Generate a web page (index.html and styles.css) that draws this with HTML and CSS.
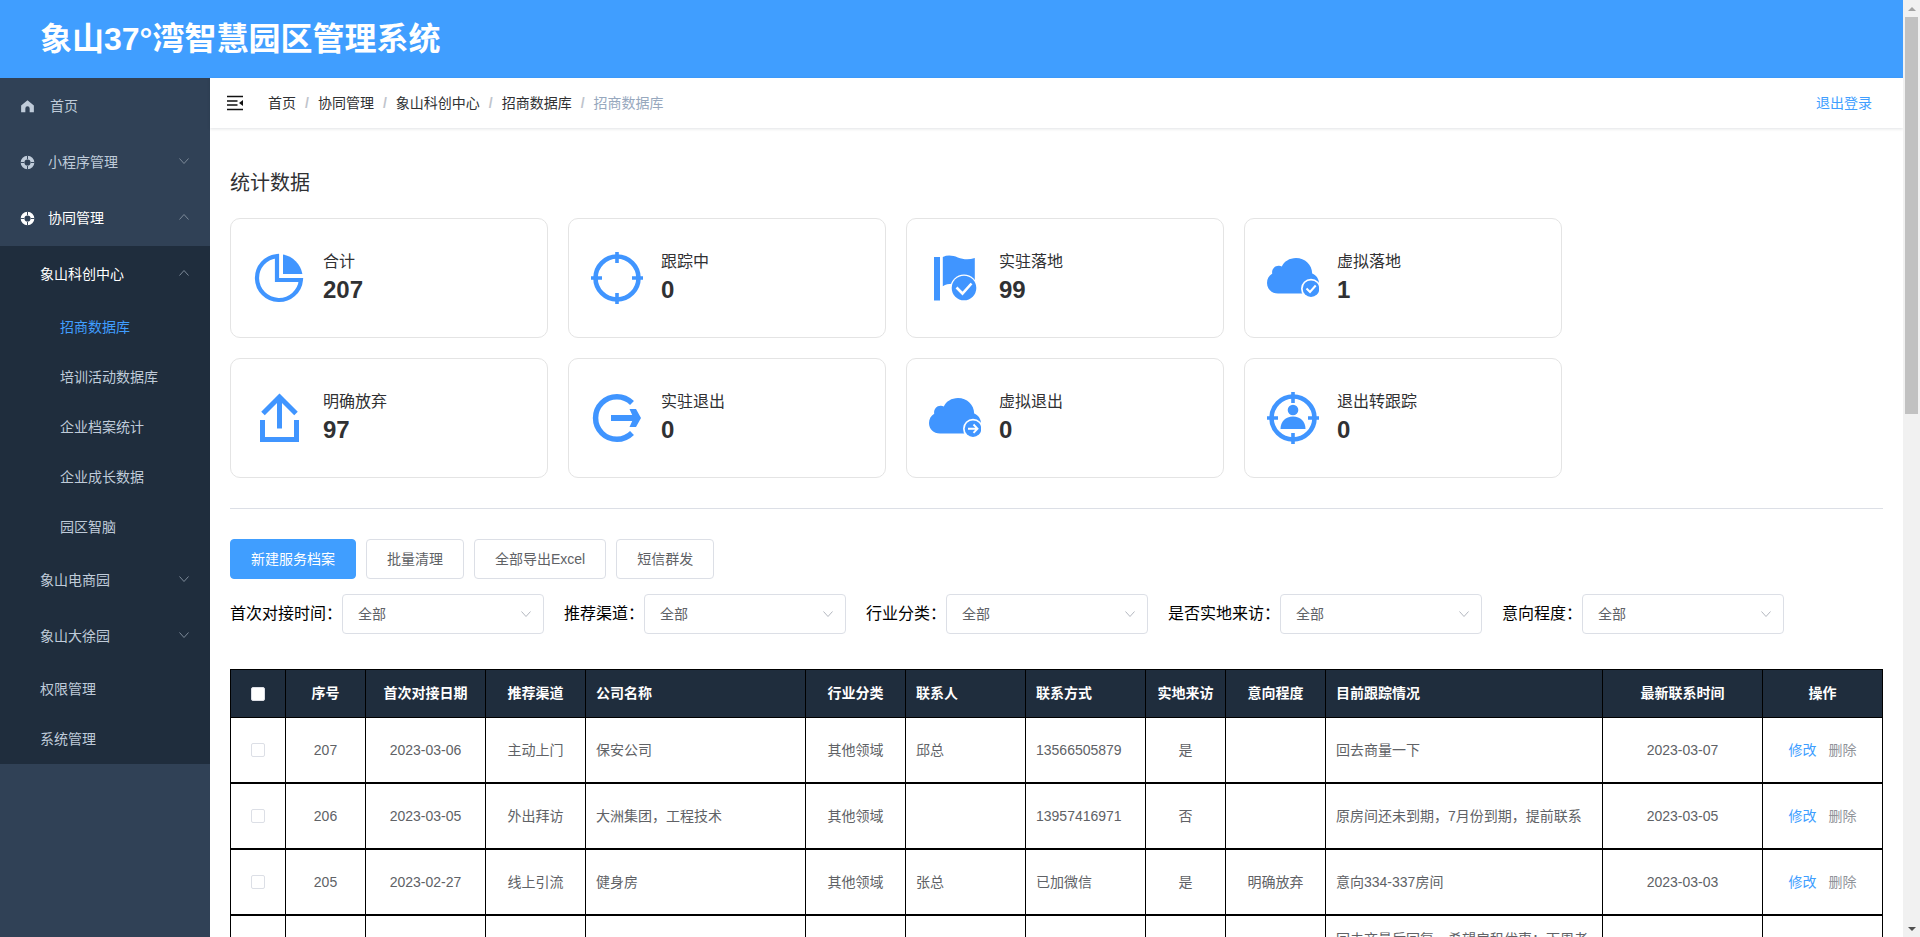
FILE: index.html
```html
<!DOCTYPE html>
<html lang="zh-CN">
<head>
<meta charset="utf-8">
<meta name="viewport" content="width=device-width, initial-scale=1">
<title>象山37°湾智慧园区管理系统</title>
<link rel="stylesheet" href="styles.css">
</head>
<body>
<svg class="sprite" aria-hidden="true">
  <symbol id="down" viewBox="0 0 12 12"><path d="M1.500 3.500 6 8.500l4.500-5" fill="none" stroke="currentColor"/></symbol>
  <symbol id="up" viewBox="0 0 12 12"><path d="M1.500 8.500 6 3.500l4.500 5" fill="none" stroke="currentColor"/></symbol>
  <symbol id="ring" viewBox="0 0 16 16"><circle cx="8" cy="8" r="5.300" fill="none" stroke="currentColor" stroke-width="4"/><path d="M8 .5v4M8 11.500v4M.5 8h4M11.500 8h4" class="ring-cut" stroke-width="1"/></symbol>
  <symbol id="target" viewBox="0 0 52 52"><g fill="none" stroke="currentColor"><circle cx="26" cy="26" r="21.500" stroke-width="4.600"/><path d="M26 0v11M26 41v11M0 26h11M41 26h11" stroke-width="3.600"/></g></symbol>
  <symbol id="cloud" viewBox="0 0 52 52"><path fill="currentColor" d="M11 41.500C4.500 41.500 0 37 0 31c0-4 2-7.500 5.200-9.300C4.500 17 8 13.500 12 13.800c1 0 2 .3 2.800.7C17 9.500 22.500 6 29 6c9 0 16 6.700 16.200 15.500C49.500 23.500 52 27 52 31.500c0 6-4 10-10 10z"/><circle cx="44" cy="36.700" r="10" fill="#fff"/><circle cx="44" cy="36.700" r="8.300" fill="currentColor"/></symbol>
</svg>
<div class="window">
  <div class="app">
    <header class="banner"><h1>象山37°湾智慧园区管理系统</h1></header>
    <div class="body">
      <nav class="side" aria-label="主菜单">
        <a class="item home" href="#"><svg class="nav-icon" viewBox="0 0 16 16"><path fill="currentColor" d="M8 1.300 14.800 7v7.200h-4.500V10a2.300 2.300 0 0 0-4.600 0v4.200H1.200V7z"/></svg>首页</a>
        <button class="item" type="button"><svg class="nav-icon"><use href="#ring"/></svg>小程序管理<svg class="arrow"><use href="#down"/></svg></button>
        <button class="item open" type="button"><svg class="nav-icon"><use href="#ring"/></svg>协同管理<svg class="arrow"><use href="#up"/></svg></button>
        <div class="submenu">
          <button class="item open" type="button">象山科创中心<svg class="arrow"><use href="#up"/></svg></button>
          <a class="item leaf deep current" href="#">招商数据库</a>
          <a class="item leaf deep" href="#">培训活动数据库</a>
          <a class="item leaf deep" href="#">企业档案统计</a>
          <a class="item leaf deep" href="#">企业成长数据</a>
          <a class="item leaf deep" href="#">园区智脑</a>
          <button class="item" type="button">象山电商园<svg class="arrow"><use href="#down"/></svg></button>
          <button class="item" type="button">象山大徐园<svg class="arrow"><use href="#down"/></svg></button>
          <a class="item leaf" href="#">权限管理</a>
          <a class="item leaf" href="#">系统管理</a>
        </div>
      </nav>
      <div class="main">
        <div class="topbar">
          <button class="fold" type="button" aria-label="收起菜单"><svg viewBox="0 0 16 16"><path d="M0 1.500h16M0 6h10.500M0 10h10.500M0 14.500h16" stroke="currentColor" stroke-width="1.600"/><path d="M16 5v6l-4-3z" fill="currentColor"/></svg></button>
          <ol class="crumbs">
            <li><a href="#">首页</a></li><li><a href="#">协同管理</a></li><li><a href="#">象山科创中心</a></li><li><a href="#">招商数据库</a></li><li>招商数据库</li>
          </ol>
          <a class="logout" href="#">退出登录</a>
        </div>
        <main class="content">
          <h2>统计数据</h2>
          <section class="stats">
            <div class="card"><svg class="stat-icon" viewBox="0 0 52 52"><path d="M24 4.100A22 22 0 1 0 47.900 28H24z" fill="none" stroke="currentColor" stroke-width="4.200"/><path d="M30 2.600A24 24 0 0 1 49.400 22H30z" fill="currentColor"/></svg><div class="stat"><span>合计</span><strong>207</strong></div></div>
            <div class="card"><svg class="stat-icon"><use href="#target"/></svg><div class="stat"><span>跟踪中</span><strong>0</strong></div></div>
            <div class="card"><svg class="stat-icon" viewBox="0 0 52 52"><path fill="currentColor" d="M5 5h6v43.500H5zM13.800 5c5-2.300 10-1.500 15 .5 5.500 2 11 2.500 17 .5v26H25c-4-.5-7.500.3-11.200 2.200z"/><circle cx="35" cy="36" r="13.600" fill="#fff"/><circle cx="35" cy="36" r="12.300" fill="currentColor"/><path d="m27.500 35.500 6 6 9-10" fill="none" stroke="#fff" stroke-width="2.600"/></svg><div class="stat"><span>实驻落地</span><strong>99</strong></div></div>
            <div class="card"><svg class="stat-icon" viewBox="0 0 52 52"><use href="#cloud"/><path d="m39.500 36.500 3.500 3.500 5.700-6.500" fill="none" stroke="#fff" stroke-width="2"/></svg><div class="stat"><span>虚拟落地</span><strong>1</strong></div></div>
            <div class="card"><svg class="stat-icon" viewBox="0 0 52 52"><g fill="none" stroke="currentColor" stroke-width="5"><path d="M9.500 28v19.500h34V28M26.500 36.500V6"/><path d="M10 21.500 26.500 5 43 21.500"/></g></svg><div class="stat"><span>明确放弃</span><strong>97</strong></div></div>
            <div class="card"><svg class="stat-icon" viewBox="0 0 52 52"><path d="M41 11A21.300 21.300 0 1 0 41 41" fill="none" stroke="currentColor" stroke-width="5.500"/><path d="M38.500 17H45l5 9-5 9h-6.500l2.700-6H20v-6h21.200z" fill="currentColor"/></svg><div class="stat"><span>实驻退出</span><strong>0</strong></div></div>
            <div class="card"><svg class="stat-icon" viewBox="0 0 52 52"><use href="#cloud"/><path d="M39 36.700h9M44.500 32.500l4 4.200-4 4.200" fill="none" stroke="#fff" stroke-width="1.900"/></svg><div class="stat"><span>虚拟退出</span><strong>0</strong></div></div>
            <div class="card"><svg class="stat-icon" viewBox="0 0 52 52"><use href="#target"/><circle cx="26" cy="18" r="5.300" fill="currentColor"/><path d="M13.500 37c0-7.500 5-12.500 12.500-12.500S38.500 29.500 38.500 37z" fill="currentColor"/></svg><div class="stat"><span>退出转跟踪</span><strong>0</strong></div></div>
          </section>
          <hr class="divider">
          <div class="actions">
            <button class="btn primary" type="button">新建服务档案</button>
            <button class="btn" type="button">批量清理</button>
            <button class="btn" type="button">全部导出Excel</button>
            <button class="btn" type="button">短信群发</button>
          </div>
          <form class="filters">
            <div class="filter"><label for="f1">首次对接时间：</label><div class="pick"><select id="f1"><option>全部</option></select><svg><use href="#down"/></svg></div></div>
            <div class="filter"><label for="f2">推荐渠道：</label><div class="pick"><select id="f2"><option>全部</option></select><svg><use href="#down"/></svg></div></div>
            <div class="filter"><label for="f3">行业分类：</label><div class="pick"><select id="f3"><option>全部</option></select><svg><use href="#down"/></svg></div></div>
            <div class="filter"><label for="f4">是否实地来访：</label><div class="pick"><select id="f4"><option>全部</option></select><svg><use href="#down"/></svg></div></div>
            <div class="filter"><label for="f5">意向程度：</label><div class="pick"><select id="f5"><option>全部</option></select><svg><use href="#down"/></svg></div></div>
          </form>
          <table class="grid">
            <colgroup><col class="w-check"><col class="w-80"><col class="w-120"><col class="w-100"><col class="w-220"><col class="w-100"><col class="w-120"><col class="w-120"><col class="w-80"><col class="w-100"><col><col class="w-160"><col class="w-120"></colgroup>
            <thead><tr><th><input type="checkbox" aria-label="全选"></th><th>序号</th><th>首次对接日期</th><th>推荐渠道</th><th class="left">公司名称</th><th>行业分类</th><th class="left">联系人</th><th class="left">联系方式</th><th>实地来访</th><th>意向程度</th><th class="left">目前跟踪情况</th><th>最新联系时间</th><th>操作</th></tr></thead>
            <tbody>
              <tr><td><input type="checkbox" aria-label="选择207"></td><td>207</td><td>2023-03-06</td><td>主动上门</td><td class="left">保安公司</td><td>其他领域</td><td class="left">邱总</td><td class="left">13566505879</td><td>是</td><td></td><td class="left">回去商量一下</td><td>2023-03-07</td><td><a class="edit" href="#">修改</a><a class="remove" href="#">删除</a></td></tr>
              <tr><td><input type="checkbox" aria-label="选择206"></td><td>206</td><td>2023-03-05</td><td>外出拜访</td><td class="left">大洲集团，工程技术</td><td>其他领域</td><td class="left"></td><td class="left">13957416971</td><td>否</td><td></td><td class="left">原房间还未到期，7月份到期，提前联系</td><td>2023-03-05</td><td><a class="edit" href="#">修改</a><a class="remove" href="#">删除</a></td></tr>
              <tr><td><input type="checkbox" aria-label="选择205"></td><td>205</td><td>2023-02-27</td><td>线上引流</td><td class="left">健身房</td><td>其他领域</td><td class="left">张总</td><td class="left">已加微信</td><td>是</td><td>明确放弃</td><td class="left">意向334-337房间</td><td>2023-03-03</td><td><a class="edit" href="#">修改</a><a class="remove" href="#">删除</a></td></tr>
              <tr><td><input type="checkbox" aria-label="选择204"></td><td>204</td><td></td><td></td><td class="left"></td><td></td><td class="left"></td><td class="left"></td><td></td><td></td><td class="left">回去商量后回复，希望房租优惠；下周老板再来</td><td></td><td><a class="edit" href="#">修改</a><a class="remove" href="#">删除</a></td></tr>
            </tbody>
          </table>
        </main>
      </div>
    </div>
  </div>
  <div class="scrollbar" aria-hidden="true"><i class="tri-up"></i><div class="track"><div class="thumb"></div></div><i class="tri-down"></i></div>
</div>
</body>
</html>
```

FILE: styles.css
```css
* { box-sizing: border-box; }
body { margin: 0; background: #fff; color: #303133; font: 14px/1.5 "Liberation Sans", "Noto Sans CJK SC", sans-serif; }
a { color: inherit; text-decoration: none; }
button, select { font: inherit; cursor: pointer; }
h1, h2 { margin: 0; }
.sprite { display: none; }

.window { display: grid; grid-template-columns: minmax(0, 1fr) 17px; height: 100vh; overflow: hidden; }
.app { display: flex; flex-direction: column; min-height: 0; overflow: hidden; }
.banner { flex: none; padding: 15px 40px; background: #409eff; color: #fff; }
.banner h1 { font-size: 32px; line-height: 48px; }
.body { display: flex; flex: 1; min-height: 0; }

.side { flex: none; width: 210px; background: #304156; color: #bfcbd9; }
.item { display: flex; align-items: center; width: 100%; height: 56px; padding: 0 20px; border: 0; background: none; color: inherit; text-align: left; }
.item.open { color: #fff; }
.nav-icon { width: 15px; height: 15px; margin-right: 13px; }
.home .nav-icon { margin-right: 15px; }
.ring-cut { stroke: #304156; }
.arrow { width: 12px; height: 12px; margin-left: auto; margin-bottom: 3px; color: #7c8998; }
.submenu { background: #1f2d3d; }
.submenu .item { padding-left: 40px; }
.submenu .leaf { height: 50px; }
.submenu .deep { padding-left: 60px; }
.submenu .current { color: #409eff; }

.main { flex: 1; min-width: 0; }
.topbar { display: flex; align-items: center; height: 50px; padding: 0 31px 0 17px; box-shadow: 0 1px 3px rgba(0, 21, 41, .12); }
.fold { display: flex; padding: 0; border: 0; background: none; color: #111; }
.fold svg { width: 16px; height: 16px; }
.crumbs { display: flex; margin: 0 auto 0 25px; padding: 0; list-style: none; }
.crumbs li + li::before { content: "/"; margin: 0 9px; color: #c0c4cc; font-weight: bold; }
.crumbs li:last-child { color: #97a8be; }
.logout { color: #409eff; }

.content { padding: 40px 20px; }
.content h2 { font-size: 20px; font-weight: normal; line-height: 30px; }
.stats { display: grid; grid-template-columns: repeat(4, 1fr); gap: 20px; max-width: 1332px; margin-top: 20px; }
.card { display: flex; align-items: center; gap: 18px; height: 120px; padding: 0 22px; border: 1px solid #e4e4e4; border-radius: 10px; }
.stat-icon { flex: none; width: 52px; height: 52px; color: #4095ff; }
.stat { padding-bottom: 4px; line-height: 28px; }
.stat span, .stat strong { display: block; }
.stat span { font-size: 16px; }
.stat strong { font-size: 24px; }
.divider { height: 1px; margin: 30px 0; border: 0; background: #dcdfe6; }

.actions { display: flex; gap: 10px; }
.btn { height: 40px; padding: 0 20px; border: 1px solid #dcdfe6; border-radius: 4px; background: #fff; color: #606266; }
.btn.primary { border-color: #409eff; background: #409eff; color: #fff; }
.filters { display: flex; flex-wrap: wrap; gap: 15px 20px; margin-top: 15px; }
.filter { display: flex; align-items: center; color: #000; font-size: 16px; }
.pick { position: relative; }
.pick select { display: block; width: 202px; height: 40px; padding: 0 15px; appearance: none; border: 1px solid #dcdfe6; border-radius: 4px; background: #fff; color: #606266; font-size: 14px; }
.pick svg { position: absolute; top: 14px; right: 12px; width: 12px; height: 12px; color: #b4b8c0; pointer-events: none; }

.grid { width: 100%; margin-top: 35px; table-layout: fixed; border-collapse: separate; border-spacing: 0; border: solid #000; border-width: 1px 0 0 1px; color: #606266; line-height: 23px; }
.grid th, .grid td { padding: 12px 10px; border: 0 solid #000; border-right-width: 1px; text-align: center; vertical-align: middle; }
.grid th { height: 48px; padding: 12px 0; border-bottom-width: 1px; background: #1f2d3d; color: #fff; }
.grid td { height: 66px; border-bottom-width: 2px; }
.grid td:first-child, .grid td:nth-child(4) { padding: 12px 0; }
.grid .left { padding-left: 10px; text-align: left; }
.grid input { display: block; width: 14px; height: 14px; margin: 0 auto; appearance: none; border: 1px solid #dcdfe6; border-radius: 2px; background: #fff; }
.w-check { width: 55px; }
.w-80 { width: 80px; }
.w-100 { width: 100px; }
.w-120 { width: 120px; }
.w-160 { width: 160px; }
.w-220 { width: 220px; }
.edit { color: #409eff; }
.remove { margin-left: 12px; color: #909399; }

.scrollbar { display: flex; flex-direction: column; align-items: center; background: #f1f1f1; }
.track { flex: 1; width: 13px; }
.thumb { height: 44%; background: #c1c1c1; }
.tri-up, .tri-down { width: 8px; height: 4px; border: 4px solid transparent; border-top-width: 0; border-bottom: 4px solid #a3a3a3; margin: 7px 0 6px; }
.tri-down { border-top: 4px solid #505050; border-bottom-width: 0; }
```
